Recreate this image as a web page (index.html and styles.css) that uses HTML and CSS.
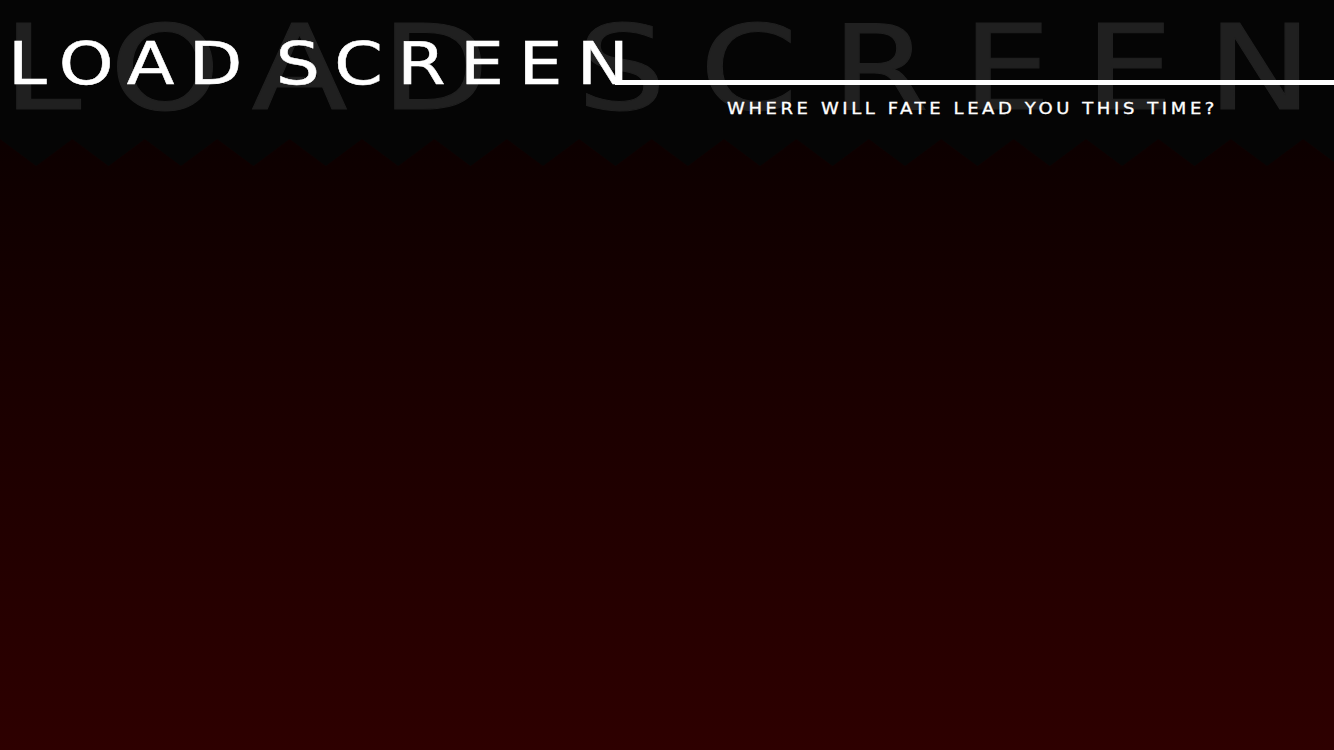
FILE: index.html
```html
<!DOCTYPE html>
<html lang="en">
<head>
<meta charset="utf-8">
<title>Load Screen</title>
<link rel="stylesheet" href="styles.css">
</head>
<body>
<header class="masthead">
  <div class="ghost" aria-hidden="true">LOAD SCREEN</div>
  <div class="title-row">
    <h1 class="title">LOAD SCREEN</h1>
    <span class="rule"></span>
  </div>
  <p class="tagline">WHERE WILL FATE LEAD YOU THIS TIME?</p>
</header>
<div class="teeth">
  <svg width="100%" height="27" xmlns="http://www.w3.org/2000/svg">
    <defs>
      <pattern id="zig" width="72.4" height="27" patternUnits="userSpaceOnUse">
        <polygon points="0,0 72.4,0 36.2,27" fill="#050505"/>
      </pattern>
    </defs>
    <rect width="100%" height="27" fill="url(#zig)"/>
  </svg>
</div>
<main class="stage"></main>
</body>
</html>
```

FILE: styles.css
```css
html, body {
  margin: 0;
  padding: 0;
  height: 750px;
  overflow: hidden;
}

body {
  background: linear-gradient(to bottom, #050000 0%, #2e0000 100%);
  font-family: "DejaVu Sans", "Liberation Sans", sans-serif;
  color: #ffffff;
}

.masthead {
  position: relative;
  height: 139px;
  background: #050505;
  overflow: hidden;
}

.ghost {
  position: absolute;
  left: 3px;
  top: 10px;
  font-size: 117px;
  line-height: 1;
  letter-spacing: 28px;
  word-spacing: -20px;
  color: #202020;
  -webkit-text-stroke: 1px #202020;
  white-space: nowrap;
  transform: scaleX(1.2);
  transform-origin: left center;
  z-index: 0;
}

.title-row {
  position: relative;
  z-index: 1;
  display: flex;
  align-items: flex-start;
  padding-top: 35px;
  padding-left: 8px;
}

.title {
  margin: 0;
  font-size: 58px;
  line-height: 1;
  font-weight: normal;
  letter-spacing: 12px;
  word-spacing: -14.6px;
  white-space: nowrap;
  -webkit-text-stroke: 0.5px #ffffff;
  transform: scaleX(1.2);
  transform-origin: left center;
}

.rule {
  flex: 1;
  height: 5px;
  margin-top: 45px;
  margin-left: 78px;
  background: #ffffff;
}

.tagline {
  position: relative;
  z-index: 1;
  margin: 9px 0 0 727px;
  font-size: 15px;
  line-height: 1;
  letter-spacing: 3px;
  white-space: nowrap;
  -webkit-text-stroke: 0.3px #ffffff;
  transform: scaleX(1.2);
  transform-origin: left center;
}

.teeth {
  height: 27px;
  line-height: 0;
}

.teeth svg {
  display: block;
}

.stage {
  height: 584px;
}
```
